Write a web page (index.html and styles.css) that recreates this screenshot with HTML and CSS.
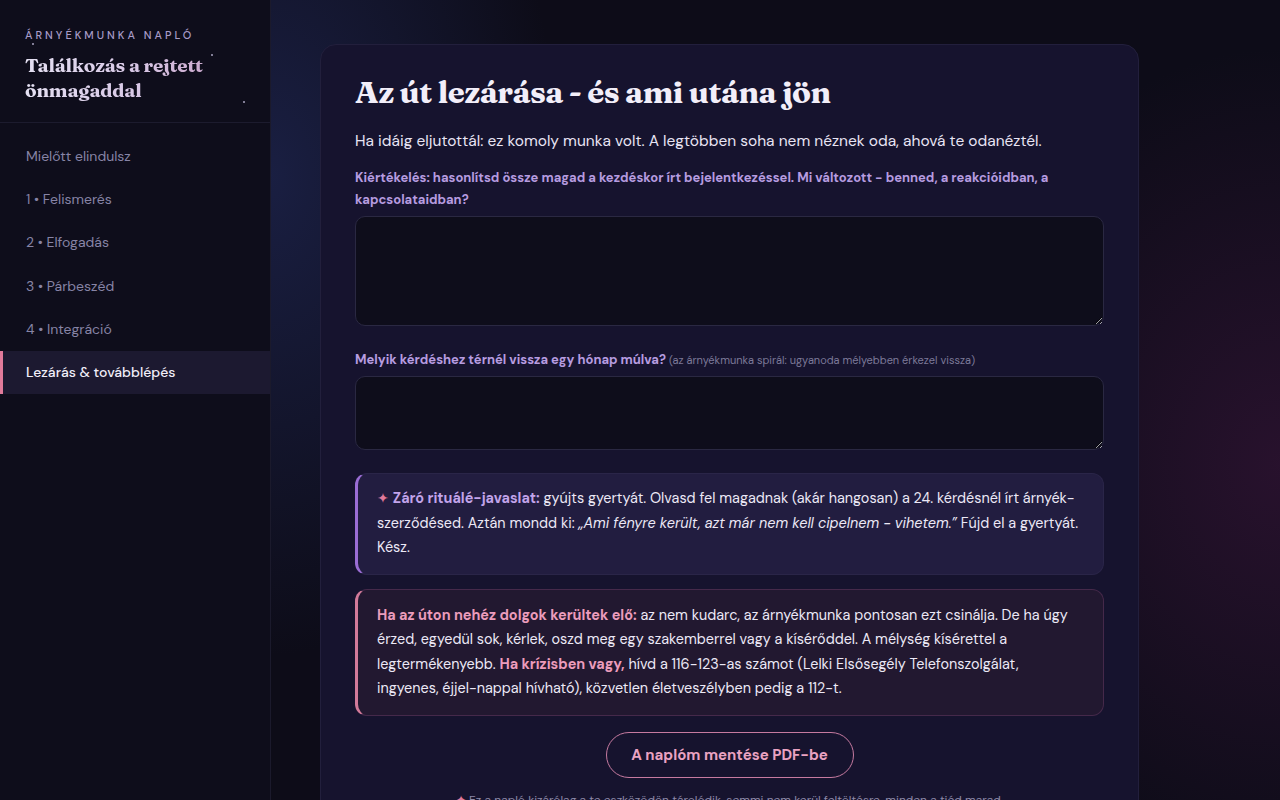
FILE: index.html
```html
<!DOCTYPE html>
<html lang="hu">
<head>
<meta charset="utf-8">
<title>Árnyékmunka napló</title>
<link rel="stylesheet" href="styles.css">
</head>
<body>
<div class="app">
  <aside class="sidebar">
    <div class="brand">
      <div class="eyebrow">Árnyékmunka napló</div>
      <div class="title">Találkozás a rejtett önmagaddal</div>
      <span class="star s1"></span><span class="star s2"></span><span class="star s3"></span>
    </div>
    <nav class="nav">
      <a class="nav-item">Mielőtt elindulsz</a>
      <a class="nav-item">1 • Felismerés</a>
      <a class="nav-item">2 • Elfogadás</a>
      <a class="nav-item">3 • Párbeszéd</a>
      <a class="nav-item">4 • Integráció</a>
      <a class="nav-item active">Lezárás &amp; továbblépés</a>
    </nav>
  </aside>
  <main class="main">
    <section class="card">
      <h1>Az út lezárása - és ami utána jön</h1>
      <p class="lead">Ha idáig eljutottál: ez komoly munka volt. A legtöbben soha nem néznek oda, ahová te odanéztél.</p>
      <label class="q">Kiértékelés: hasonlítsd össze magad a kezdéskor írt bejelentkezéssel. Mi változott - benned, a reakcióidban, a kapcsolataidban?</label>
      <textarea class="ta ta-lg"></textarea>
      <label class="q">Melyik kérdéshez térnél vissza egy hónap múlva? <span class="hint">(az árnyékmunka spirál: ugyanoda mélyebben érkezel vissza)</span></label>
      <textarea class="ta ta-sm"></textarea>
      <div class="callout ritual">
        <span class="spark">✦</span> <strong>Záró rituálé-javaslat:</strong> gyújts gyertyát. Olvasd fel magadnak (akár hangosan) a 24. kérdésnél írt árnyék-szerződésed. Aztán mondd ki: <em>„Ami fényre került, azt már nem kell cipelnem - vihetem.”</em> Fújd el a gyertyát. Kész.
      </div>
      <div class="callout care">
        <strong>Ha az úton nehéz dolgok kerültek elő:</strong> az nem kudarc, az árnyékmunka pontosan ezt csinálja. De ha úgy érzed, egyedül sok, kérlek, oszd meg egy szakemberrel vagy a kísérőddel. A mélység kísérettel a legtermékenyebb. <strong>Ha krízisben vagy,</strong> hívd a 116-123-as számot (Lelki Elsősegély Telefonszolgálat, ingyenes, éjjel-nappal hívható), közvetlen életveszélyben pedig a 112-t.
      </div>
      <div class="actions">
        <button class="btn">A naplóm mentése PDF-be</button>
      </div>
      <p class="foot"><span class="spark">✦</span> Ez a napló kizárólag a te eszközödön tárolódik, semmi nem kerül feltöltésre, minden a tiéd marad.</p>
    </section>
  </main>
</div>
</body>
</html>
```

FILE: styles.css
```css
* { box-sizing: border-box; }
html, body { margin: 0; height: 100%; }
body {
  background: #0d0c18;
  color: #e6e2f2;
  font-family: "DM Sans", Inter, "Noto Sans", sans-serif;
  overflow: hidden;
}
.app { display: flex; height: 100vh; }

.sidebar {
  width: 271px;
  flex: none;
  background: #0e0d1b;
  border-right: 1px solid #1b1a2c;
  display: flex;
  flex-direction: column;
}
.brand {
  position: relative;
  padding: 29px 24px 19px 25px;
  border-bottom: 1px solid #1c1b2e;
}
.eyebrow {
  font-size: 11px;
  letter-spacing: 3px;
  text-transform: uppercase;
  color: #a89cc8;
  font-weight: 500;
  line-height: 13px;
}
.title {
  margin-top: 11px;
  font-family: Fraunces, "Liberation Serif", serif;
  font-weight: 700;
  font-size: 19px;
  line-height: 25px;
  letter-spacing: -0.2px;
  background: linear-gradient(90deg, #e4e0f2 0%, #d8c8e6 55%, #c8a2c8 100%);
  -webkit-background-clip: text;
  background-clip: text;
  color: transparent;
  width: 200px;
}
.star {
  position: absolute;
  width: 2px; height: 2px;
  border-radius: 50%;
  background: #cfc8ea;
  opacity: 0.8;
}
.s1 { left: 32px; top: 43px; }
.s2 { left: 211px; top: 54px; }
.s3 { left: 243px; top: 101px; }

.nav { display: flex; flex-direction: column; padding-top: 12px; }
.nav-item {
  display: block;
  padding: 12px 26px 12px 23px;
  font-size: 14px;
  line-height: 19.2px;
  color: #8784a6;
  border-left: 3px solid transparent;
}
.nav-item.active {
  background: #1c1930;
  border-left-color: #e07a9a;
  color: #f1eef9;
  font-weight: 500;
}

.main {
  flex: 1;
  overflow: hidden;
  padding: 44px 0 0 49px;
  background:
    radial-gradient(ellipse 420px 520px at 100% 58%, rgba(62, 22, 62, 0.55), transparent 80%),
    radial-gradient(ellipse 360px 600px at 0% 22%, rgba(36, 46, 100, 0.55), transparent 80%),
    #0d0c18;
}
.card {
  width: 819px;
  background: #16132e;
  border: 1px solid #221f3c;
  border-radius: 16px;
  padding: 27px 34px 40px 34px;
}
h1 {
  margin: 0 0 18px;
  font-family: Fraunces, "Liberation Serif", serif;
  font-weight: 700;
  font-size: 31px;
  line-height: 40px;
  letter-spacing: -0.5px;
  color: #f2eef9;
}
.lead {
  margin: 0 0 15px;
  font-size: 15.5px;
  line-height: 22px;
  color: #e8e4f4;
}
.q {
  display: block;
  font-size: 13px;
  font-weight: 700;
  line-height: 22px;
  color: #b79ce0;
  margin-bottom: 5px;
}
.hint {
  font-size: 11px;
  font-weight: 400;
  color: #7c7998;
}
.ta {
  display: block;
  width: 100%;
  background: #0e0d1b;
  border: 1px solid #2a2842;
  border-radius: 10px;
  color: #e6e2f2;
  font: inherit;
  resize: vertical;
  margin: 0 0 23px;
}
.ta-lg { height: 110px; }
.ta-sm { height: 74px; }

.callout {
  border-radius: 12px;
  padding: 12px 20px 14px 19px;
  font-size: 14.4px;
  line-height: 24.5px;
  color: #ece8f6;
  margin-bottom: 14px;
}
.ritual {
  background: #221d40;
  border: 1px solid #2a2548;
  border-left: 3px solid #9a6dd4;
}
.ritual strong { color: #c2a4ea; }
.ritual .spark { color: #e07a9a; }
.care {
  background: #221830;
  border: 1px solid #45294a;
  border-left: 3px solid #d27a9a;
  padding-top: 13px;
}
.care strong { color: #ec9cbc; }
em { font-style: italic; }

.actions { display: flex; justify-content: center; margin-top: 16px; }
.btn {
  font: inherit;
  font-size: 15px;
  font-weight: 700;
  color: #eaa2c2;
  background: transparent;
  border: 1px solid #c67aa0;
  border-radius: 24px;
  height: 46px;
  padding: 0;
  width: 248px;
  white-space: nowrap;
}
.foot {
  text-align: center;
  font-size: 12px;
  color: #8d89a8;
  margin: 14px 0 0;
}
.foot .spark { color: #e07a9a; }
```
